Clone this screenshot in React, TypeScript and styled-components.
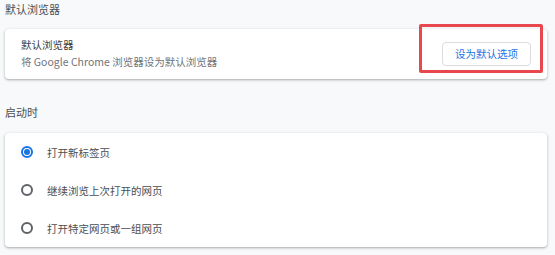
import styled, { createGlobalStyle } from 'styled-components'

const Global = createGlobalStyle`
  html, body { margin: 0; padding: 0; background: #f8f9fa; }
  body {
    font-family: "Noto Sans CJK SC", Roboto, "Liberation Sans", sans-serif;
    color: #202124;
  }
`

const Page = styled.main`
  width: 555px; height: 255px; box-sizing: border-box;
  padding: 0 8px 0 5px;
  overflow: hidden;
`
const SectionTitle = styled.h2<{ $top?: number }>`
  margin: ${({ $top }) => $top ?? 0}px 0 0;
  font-size: 11px; font-weight: 400; line-height: 18px;
  color: #4a4e52;
`
const Card = styled.section<{ $top: number }>`
  position: relative;
  margin-top: ${({ $top }) => $top}px;
  background: #fff; border-radius: 4px;
  box-shadow: 0 1px 2px rgba(60, 64, 67, .3), 0 1px 3px 1px rgba(60, 64, 67, .1);
`
const BrowserRow = styled.div`
  height: 50px; box-sizing: border-box;
  display: flex; align-items: center; justify-content: space-between;
  padding: 0 16px 3px 16px;
`
const Texts = styled.div`
  display: flex; flex-direction: column;
`
const Label = styled.div`
  font-size: 10.5px; line-height: 17px; color: #3c4043;
`
const Sub = styled.div`
  font-size: 10.5px; line-height: 17px; color: #70757a;
`
const Button = styled.button`
  width: 89px; height: 24px; margin-top: 2px;
  border: 1px solid #dadce0; border-radius: 4px;
  background: #fff; color: #1a73e8;
  font-family: inherit; font-size: 10.5px;
  padding: 0; cursor: pointer;
`
const Highlight = styled.div`
  position: absolute; left: 414px; top: -5px; width: 124px; height: 49px;
  box-sizing: border-box;
  border: 3px solid #e8474d; border-radius: 2px;
  pointer-events: none;
`
const RadioRow = styled.label`
  height: 38px; display: flex; align-items: center; gap: 14px;
  padding-left: 16px;
  font-size: 10.5px; color: #4a4e52;
`
const Radio = styled.span<{ $on?: boolean }>`
  width: 12px; height: 12px; box-sizing: border-box; border-radius: 50%;
  border: 2px solid ${({ $on }) => ($on ? '#1a73e8' : '#5f6368')};
  display: flex; align-items: center; justify-content: center;
  &::after {
    content: ''; width: 6px; height: 6px; border-radius: 50%;
    background: ${({ $on }) => ($on ? '#1a73e8' : 'transparent')};
  }
`

const startup = ['打开新标签页', '继续浏览上次打开的网页', '打开特定网页或一组网页']

export default function App() {
  return (
    <>
      <Global />
      <Page>
        <SectionTitle>默认浏览器</SectionTitle>
        <Card $top={11}>
          <BrowserRow>
            <Texts>
              <Label>默认浏览器</Label>
              <Sub>将 Google Chrome 浏览器设为默认浏览器</Sub>
            </Texts>
            <Button>设为默认选项</Button>
          </BrowserRow>
          <Highlight />
        </Card>

        <SectionTitle $top={24}>启动时</SectionTitle>
        <Card $top={12}>
          {startup.map((s, i) => (
            <RadioRow key={s}>
              <Radio $on={i === 0} />
              {s}
            </RadioRow>
          ))}
        </Card>
      </Page>
    </>
  )
}
